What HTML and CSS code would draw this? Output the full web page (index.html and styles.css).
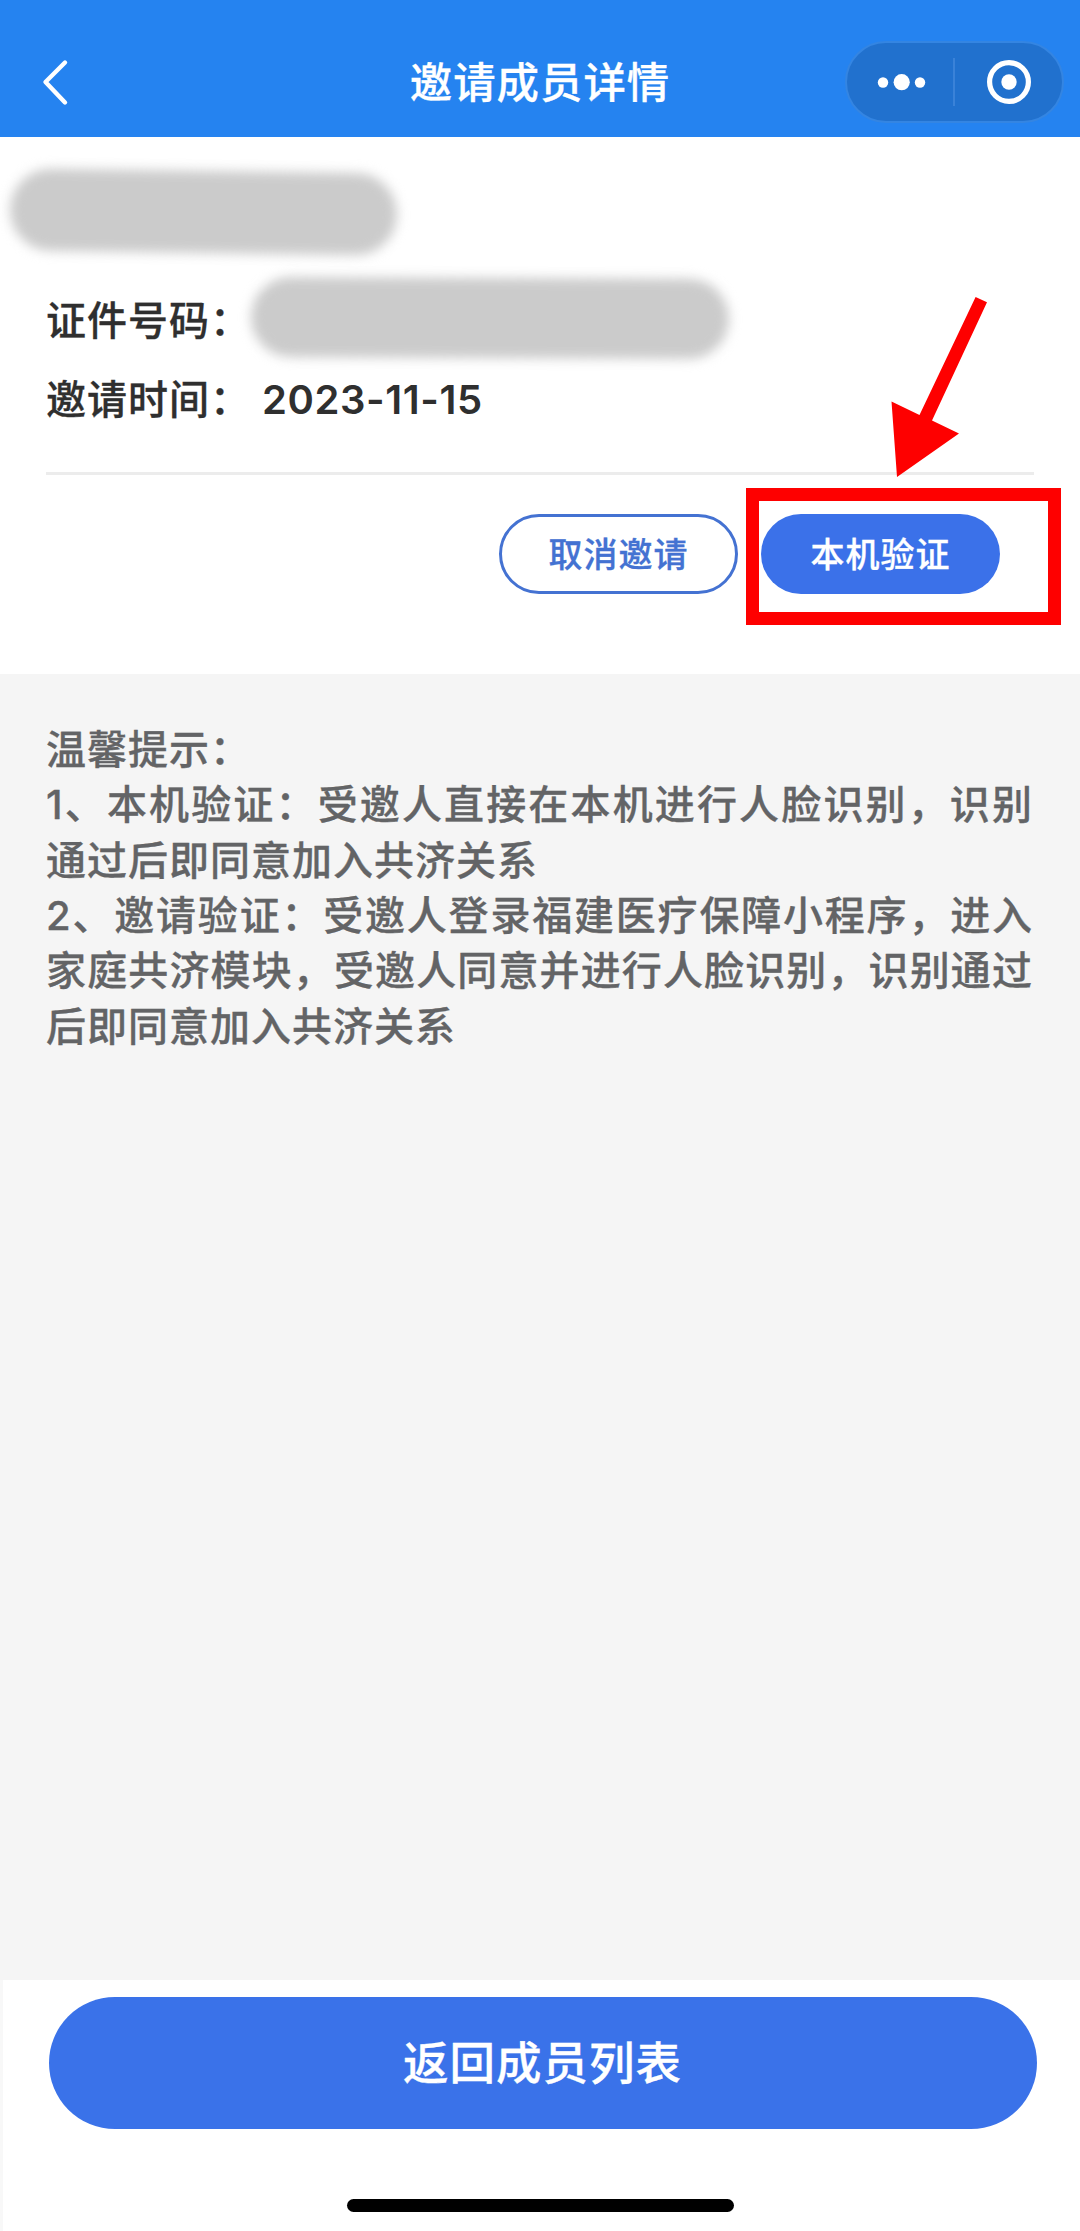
FILE: index.html
```
<!DOCTYPE html>
<html lang="zh-CN">
<head>
  <meta charset="UTF-8">
  <meta name="viewport" content="width=device-width, initial-scale=1.0">
  <title>邀请成员详情</title>
  <link rel="stylesheet" href="styles.css">
</head>
<body>
  <div class="page">
    <!-- 顶部导航栏 -->
    <header class="navbar">
      <svg class="nav-back" width="30" height="50" viewBox="0 0 30 50">
        <path d="M25 5.5 L5.5 25 L25 45.5" fill="none" stroke="#fff" stroke-width="4.4" stroke-linecap="round" stroke-linejoin="round"/>
      </svg>
      <h1 class="nav-title">邀请成员详情</h1>
      <div class="capsule">
        <svg width="214" height="78" viewBox="0 0 214 78">
          <circle cx="36" cy="39.5" r="5.2" fill="#fff"/>
          <circle cx="54.7" cy="39.2" r="8.1" fill="#fff"/>
          <circle cx="73" cy="39.5" r="5.2" fill="#fff"/>
          <rect x="106" y="15" width="2" height="48" fill="#3a82d8"/>
          <circle cx="162" cy="39" r="19.4" fill="none" stroke="#fff" stroke-width="5.2"/>
          <circle cx="162" cy="39" r="7.7" fill="#fff"/>
        </svg>
      </div>
    </header>

    <!-- 成员信息 -->
    <section class="card">
      <div class="mask mask-name"></div>
      <div class="info-row">
        <span class="label">证件号码：</span>
        <span class="mask mask-id"></span>
      </div>
      <div class="info-row">
        <span class="label">邀请时间：</span>
        <span class="date">2023-11-15</span>
      </div>
      <div class="actions">
        <button class="btn btn-plain">取消邀请</button>
        <button class="btn btn-primary">本机验证</button>
        <div class="highlight"></div>
        <svg class="arrow" width="100" height="184" viewBox="0 0 100 184">
          <path d="M85.6 0 L97 5.3 L42 123.5 L69 136.5 L7 180 L1.5 104.5 L29.5 118 Z" fill="#fe0000"/>
        </svg>
      </div>
    </section>

    <!-- 温馨提示 -->
    <section class="tips">
      <p>温馨提示：</p>
      <p>1、本机验证：受邀人直接在本机进行人脸识别，识别通过后即同意加入共济关系</p>
      <p>2、邀请验证：受邀人登录福建医疗保障小程序，进入家庭共济模块，受邀人同意并进行人脸识别，识别通过后即同意加入共济关系</p>
    </section>

    <!-- 底部按钮 -->
    <footer class="footer">
      <button class="btn-back">返回成员列表</button>
      <div class="home-bar"></div>
    </footer>
  </div>
</body>
</html>
```

FILE: styles.css
```
* {
  box-sizing: border-box;
}
body {
  margin: 0;
  background: #f5f5f5;
  font-family: Inter, "Noto Sans CJK SC", sans-serif;
  font-weight: 500;
  -webkit-text-stroke: 0.3px;
}
p, h1 {
  margin: 0;
}
button {
  font-family: inherit;
  font-weight: 500;
  padding: 0;
}
.page {
  width: 1080px;
  height: 2231px;
  display: flex;
  flex-direction: column;
  overflow: hidden;
}

/* 导航栏 */
.navbar {
  height: 137px;
  flex-shrink: 0;
  display: grid;
  grid-template-columns: 1fr auto 1fr;
  align-items: center;
  padding: 27px 16px 0 40px;
  background: #2583f0;
}
.nav-back {
  display: block;
}
.nav-title {
  font-size: 42.4px;
  letter-spacing: 1px;
  font-weight: 500;
  line-height: 60px;
  color: #fff;
  margin-right: 24px;
  padding-top: 2px;
}
.capsule {
  justify-self: end;
  width: 219px;
  height: 82px;
  border: 2px solid #3485e2;
  border-radius: 41px;
  background: #2171ce;
}
.capsule svg {
  display: block;
}

/* 信息卡片 */
.card {
  height: 537px;
  flex-shrink: 0;
  padding: 34px 46px 0;
  background: #fff;
}
.mask {
  display: block;
  background: #cbcbcb;
  border-radius: 41px;
  filter: blur(6px);
}
.mask-name {
  width: 387px;
  height: 82px;
  margin-left: -36px;
  margin-bottom: 28px;
  transform: rotate(0.8deg);
}
.mask-id {
  width: 478px;
  height: 80px;
  margin-top: -6px;
  transform: rotate(0.25deg);
}
.info-row {
  display: flex;
  align-items: center;
  height: 79px;
  font-size: 40px;
  letter-spacing: 1px;
  line-height: 79px;
  color: #2f2f2f;
}
.label {
  width: 205px;
  white-space: nowrap;
}
.date {
  margin-left: 11px;
  font-size: 40px;
  letter-spacing: 0.6px;
  font-weight: 600;
  -webkit-text-stroke: 0;
}
.actions {
  position: relative;
  display: flex;
  justify-content: flex-end;
  gap: 23px;
  margin-top: 33px;
  padding: 39px 34px 0 0;
  border-top: 3px solid #ececec;
}
.btn {
  width: 239px;
  height: 80px;
  padding-bottom: 3px;
  border-radius: 40px;
  font-size: 34px;
  letter-spacing: 1px;
}
.btn-plain {
  border: 3px solid #4472d2;
  background: #fff;
  color: #4472d2;
}
.btn-primary {
  border: none;
  background: #3b71e9;
  color: #fff;
}
/* 红框和箭头标注 */
.highlight {
  position: absolute;
  left: 700px;
  top: 13px;
  width: 315px;
  height: 137px;
  border: 13px solid #fe0000;
}
.arrow {
  position: absolute;
  left: 844px;
  top: -178px;
}

/* 提示 */
.tips {
  flex: 1;
  padding: 48px 47px 0 46px;
  font-size: 40px;
  letter-spacing: 1px;
  line-height: 55.35px;
  color: #636466;
  text-align: justify;
}

/* 底部 */
.footer {
  height: 251px;
  flex-shrink: 0;
  display: flex;
  flex-direction: column;
  align-items: center;
  padding: 17px 0 0 2px;
  background: #fff;
  border-left: 3px solid #f8f8f8;
}
.btn-back {
  width: 988px;
  height: 132px;
  padding-bottom: 6px;
  border: none;
  border-radius: 66px;
  background: #3a72e9;
  color: #fff;
  font-size: 45.5px;
  letter-spacing: 1px;
}
.home-bar {
  width: 387px;
  height: 13px;
  margin: 70px 5px 0 0;
  border-radius: 7px;
  background: #000;
}
```
